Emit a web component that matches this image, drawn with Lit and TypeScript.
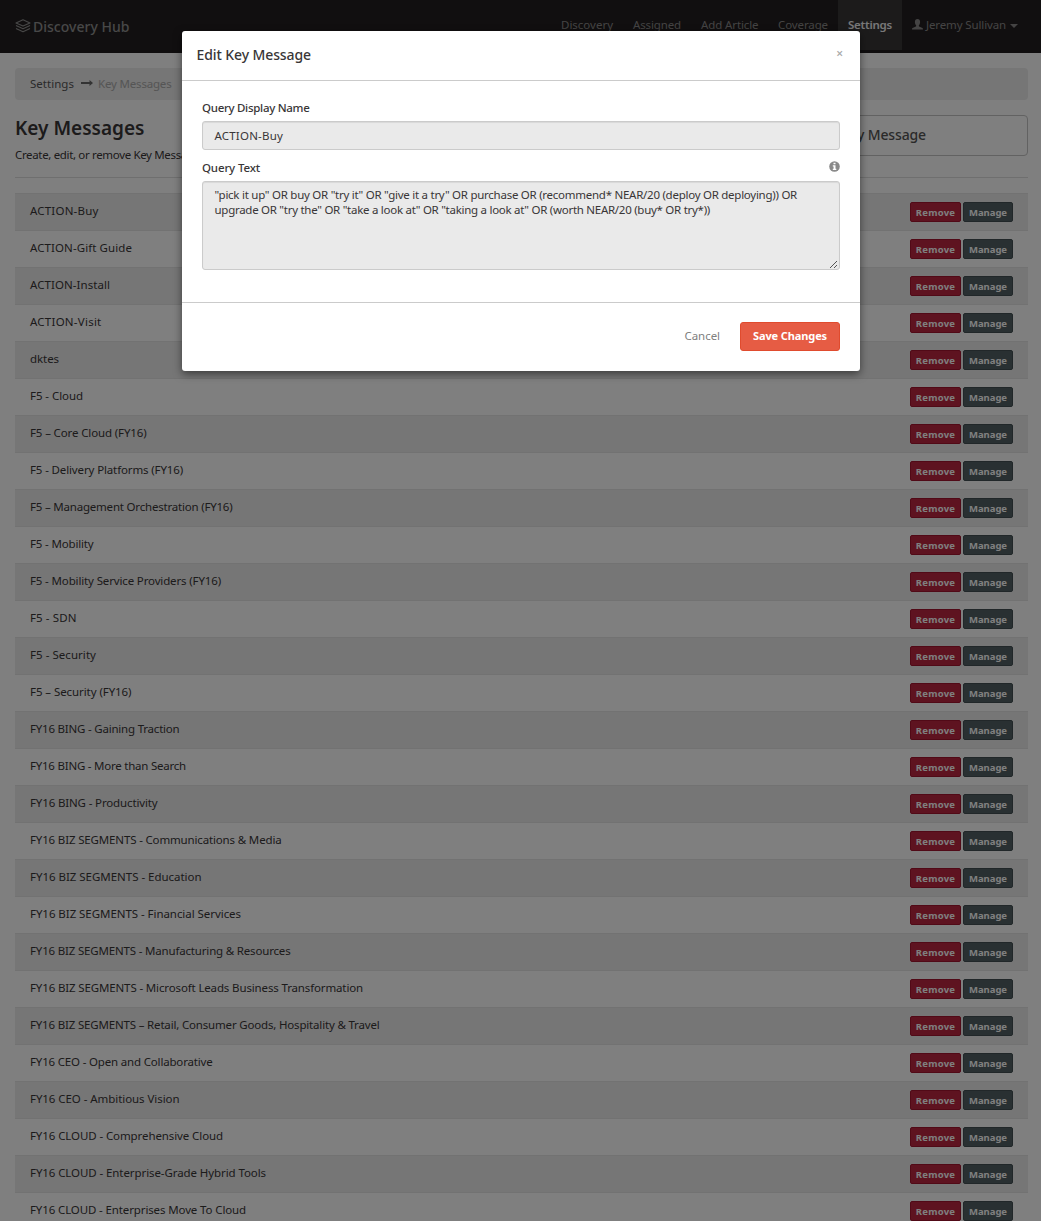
import { LitElement, html, css, svg } from "lit";
import { customElement, property } from "lit/decorators.js";

/** A single line of text whose tracking is adjusted so it fills a set width. */
@customElement("fit-text")
class FitText extends LitElement {
  static styles = css`
    :host { display: inline-block; white-space: pre; }
  `;
  @property({ type: String }) text = "";
  @property({ type: Number }) width = 0;

  render() {
    return html`<span>${this.text}</span>`;
  }

  updated() {
    const span = this.renderRoot.querySelector("span") as HTMLElement;
    span.style.letterSpacing = "0px";
    const natural = span.getBoundingClientRect().width;
    if (this.width && natural) {
      span.style.letterSpacing = `${(this.width - natural) / this.text.length}px`;
    }
  }
}

const fit = (text: string, width: number) => html`<fit-text .text=${text} .width=${width}></fit-text>`;

const NAV: [string, number][] = [
  ["Discovery", 52],
  ["Assigned", 48],
  ["Add Article", 57.5],
  ["Coverage", 50],
  ["Settings", 44],
];

const MESSAGES: [string, number][] = [
  ["ACTION-Buy", 68.5],
  ["ACTION-Gift Guide", 102],
  ["ACTION-Install", 80],
  ["ACTION-Visit", 71.5],
  ["dktes", 29],
  ["F5 - Cloud", 53],
  ["F5 – Core Cloud (FY16)", 116.5],
  ["F5 - Delivery Platforms (FY16)", 153],
  ["F5 – Management Orchestration (FY16)", 202.5],
  ["F5 - Mobility", 63.5],
  ["F5 - Mobility Service Providers (FY16)", 191],
  ["F5 - SDN", 46.5],
  ["F5 - Security", 66],
  ["F5 – Security (FY16)", 101.5],
  ["FY16 BING - Gaining Traction", 149.5],
  ["FY16 BING - More than Search", 156],
  ["FY16 BING - Productivity", 127.5],
  ["FY16 BIZ SEGMENTS - Communications & Media", 251.5],
  ["FY16 BIZ SEGMENTS - Education", 171.5],
  ["FY16 BIZ SEGMENTS - Financial Services", 211],
  ["FY16 BIZ SEGMENTS - Manufacturing & Resources", 260.5],
  ["FY16 BIZ SEGMENTS - Microsoft Leads Business Transformation", 333],
  ["FY16 BIZ SEGMENTS – Retail, Consumer Goods, Hospitality & Travel", 349.5],
  ["FY16 CEO - Open and Collaborative", 182.5],
  ["FY16 CEO - Ambitious Vision", 149.5],
  ["FY16 CLOUD - Comprehensive Cloud", 193],
  ["FY16 CLOUD - Enterprise-Grade Hybrid Tools", 236],
  ["FY16 CLOUD - Enterprises Move To Cloud", 216],
];

const layersIcon = svg`<svg class="layers" viewBox="0 0 16 14" width="16" height="14" fill="none" stroke="currentColor" stroke-width="1.1" stroke-linejoin="round">
  <path d="M8 .7 15 3.900 8 7.100 1 3.900Z"/><path d="M1 6.600 8 9.800 15 6.600"/><path d="M1 9.500 8 12.700 15 9.500"/>
</svg>`;

const arrowIcon = svg`<svg class="arrow" viewBox="0 0 12 8" width="12" height="8" fill="currentColor"><path d="M0 3h8.500V1L12 4 8.500 7V5H0Z"/></svg>`;

const userIcon = svg`<svg class="user" viewBox="0 0 11 11" width="11" height="11" fill="currentColor"><path d="M5.500 0C7.200 0 8.100 1.200 8.100 2.900c0 1.500-.6 2.700-1.200 3.400-.2.700 0 1.200.7 1.500l2.300 1c.7.300 1.100.7 1.100 1.700H0c0-1 .4-1.400 1.100-1.700l2.300-1c.7-.3.900-.8.700-1.500C3.500 5.600 2.900 4.400 2.900 2.900 2.900 1.200 3.800 0 5.500 0Z"/></svg>`;

const infoIcon = svg`<svg class="info" viewBox="0 0 11 11" width="11" height="11"><circle cx="5.500" cy="5.500" r="5.300" fill="#8a8a8a"/><path d="M4.500 1.700h2v1.600h-2zM3.800 4.300h2.700v3.500h.8v1.200H3.800V7.800h.8V5.500h-.8z" fill="#fff"/></svg>`;

const gripIcon = svg`<svg class="grip" viewBox="0 0 9 9" width="9" height="9" stroke="#555" stroke-width="1" fill="none"><path d="M1 8 8 1M5 8 8 5"/></svg>`;

@customElement("app-root")
class AppRoot extends LitElement {
  static styles = css`
    :host {
      display: block;
      position: relative;
      width: 100%;
      height: 1221px;
      overflow: hidden;
      background: #fff;
      color: #393637;
      font: 11.5px/15px "Noto Sans", "Open Sans", sans-serif;
    }
    * { box-sizing: border-box; }
    svg { display: block; flex: none; }

    .navbar {
      display: flex;
      justify-content: space-between;
      height: 53px;
      padding: 0 15px;
      background: #231f20;
      border-bottom: 3px solid #1f1b1c;
      color: #8a8888;
    }
    .brand { display: flex; gap: 2px; padding-top: 18px; font-size: 14px; line-height: 18px; font-weight: 500; color: #909090; }
    .layers { margin-top: 1px; }
    .nav { display: flex; height: 50px; margin-right: -2px; }
    .item { display: flex; padding: 17px 0 0 10px; align-items: flex-start; }
    .item.discovery { width: 72px; }
    .item.assigned { width: 68px; }
    .item.add { width: 77px; }
    .item.coverage { width: 70px; }
    .item.settings { width: 64px; background: #393637; color: #f0f0f0; font-weight: 600; }
    .item.account { width: 126px; gap: 3px; }
    .user { margin-top: 2px; }
    .caret { width: 0; height: 0; margin: 7px 0 0 1px; border: 4px solid transparent; border-top-color: currentColor; border-bottom: 0; }

    .page { padding: 15px 13px 0 15px; }
    .crumbs { display: flex; height: 32px; padding: 8px 15px; background: #ececec; border-radius: 4px; color: #555; }
    .arrow { margin: 3px 5px 0 7px; color: #666; }
    .here { color: #aaa; }
    .heading { display: flex; justify-content: space-between; height: 78px; border-bottom: 1px solid #dedede; }
    .title { padding-top: 15px; font-size: 19px; line-height: 26px; font-weight: 600; }
    .sub { padding-top: 6px; }
    .add-btn { width: 334px; height: 41px; margin-top: 15px; padding: 10px 101px 0 0; border: 1px solid #c4c4c4; border-radius: 4px; text-align: right; font-size: 14px; line-height: 18px; font-weight: 500; color: #555; white-space: nowrap; }

    .list { margin-top: 15px; }
    .row { display: flex; align-items: flex-start; justify-content: space-between; height: 37px; padding: 9px 15px 0; }
    .row:nth-child(odd) { height: 38px; margin-bottom: -1px; background: #ececec; border: 1px solid #e4e4e4; border-width: 1px 0; padding-top: 8px; }
    .name { line-height: 18px; }
    .actions { display: flex; gap: 2px; }
    .btn { display: flex; justify-content: center; height: 20px; border: 1px solid; border-radius: 2px; font-size: 9.5px; line-height: 19px; font-weight: 700; color: #fff; }
    .remove { width: 51px; background: #bc2640; border-color: #a3152f; }
    .manage { width: 50px; background: #526164; border-color: #424f52; }

    .backdrop { position: absolute; inset: 0; background: rgba(0, 0, 0, 0.5); }
    .modal { position: absolute; left: 182px; top: 31px; width: 678px; height: 340px; background: #fff; border-radius: 3px; box-shadow: 0 3px 9px rgba(0, 0, 0, 0.5); }
    .m-head { display: flex; justify-content: space-between; height: 50px; padding: 15px 17px 0 14.5px; border-bottom: 1px solid #cbcbcb; font-size: 14px; line-height: 18px; font-weight: 500; }
    .close { color: #aaa; font-size: 12px; line-height: 15px; font-weight: 600; }
    .m-body { height: 221px; padding: 19px 20px 0; }
    .label { display: flex; justify-content: space-between; align-items: flex-start; height: 21px; line-height: 16px; font-weight: 500; }
    .info { margin-top: 1px; }
    .field { position: relative; border: 1px solid #cbcbcb; border-radius: 3px; background: #eaeaea; box-shadow: inset 0 1px 1px rgba(0, 0, 0, 0.075); padding: 6px 11.5px; }
    .input { height: 29px; margin-bottom: 10px; }
    .area { height: 89px; padding-top: 5px; }
    .line { display: block; height: 15px; }
    .grip { position: absolute; right: 1px; bottom: 0; }
    .m-foot { display: flex; justify-content: flex-end; align-items: flex-start; gap: 20px; height: 69px; padding: 19px 20px 0; border-top: 1px solid #cbcbcb; }
    .cancel { padding-top: 6px; color: #808080; }
    .save { display: flex; justify-content: center; width: 100px; height: 29px; padding-top: 5px; border: 1px solid #e04b2e; border-radius: 3px; background: #e65c44; color: #fff; font-size: 11px; font-weight: 700; }
  `;

  render() {
    const classes = ["discovery", "assigned", "add", "coverage", "settings"];
    return html`
      <header class="navbar">
        <div class="brand">${layersIcon}${fit("Discovery Hub", 96.5)}</div>
        <nav class="nav">
          ${NAV.map(([t, w], i) => html`<div class="item ${classes[i]}">${fit(t, w)}</div>`)}
          <div class="item account">${userIcon}${fit("Jeremy Sullivan", 80)}<i class="caret"></i></div>
        </nav>
      </header>
      <main class="page">
        <div class="crumbs">${fit("Settings", 44)}${arrowIcon}<span class="here">${fit("Key Messages", 73.5)}</span></div>
        <section class="heading">
          <div>
            <div class="title">${fit("Key Messages", 129.5)}</div>
            <div class="sub">${fit("Create, edit, or remove Key Messages", 190)}</div>
          </div>
          <div class="add-btn">${fit("Add Key Message", 115)}</div>
        </section>
        <div class="list">
          ${MESSAGES.map(
            ([t, w]) => html`<div class="row">
              <span class="name">${fit(t, w)}</span>
              <span class="actions">
                <span class="btn remove">${fit("Remove", 39.5)}</span>
                <span class="btn manage">${fit("Manage", 38)}</span>
              </span>
            </div>`
          )}
        </div>
      </main>
      <div class="backdrop"></div>
      <div class="modal">
        <div class="m-head">${fit("Edit Key Message", 114.5)}<span class="close">×</span></div>
        <div class="m-body">
          <div class="label">${fit("Query Display Name", 107.5)}</div>
          <div class="field input">${fit("ACTION-Buy", 68.5)}</div>
          <div class="label">${fit("Query Text", 58)}${infoIcon}</div>
          <div class="field area">
            <span class="line">${fit('"pick it up" OR buy OR "try it" OR "give it a try" OR purchase OR (recommend* NEAR/20 (deploy OR deploying)) OR', 582.5)}</span>
            <span class="line">${fit('upgrade OR "try the" OR "take a look at" OR "taking a look at" OR (worth NEAR/20 (buy* OR try*))', 495.5)}</span>
            ${gripIcon}
          </div>
        </div>
        <div class="m-foot">
          <span class="cancel">${fit("Cancel", 35.5)}</span>
          <span class="save">${fit("Save Changes", 74)}</span>
        </div>
      </div>
    `;
  }
}
